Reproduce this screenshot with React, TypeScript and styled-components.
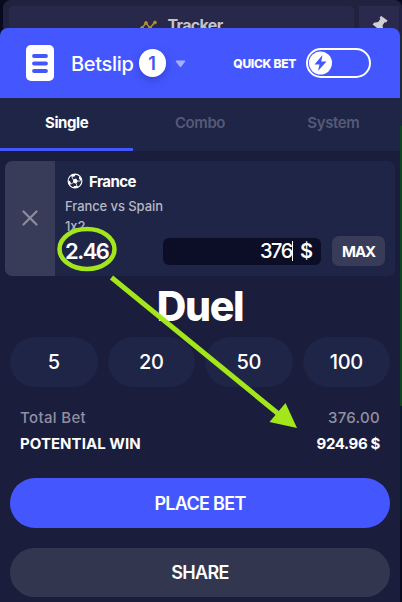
import React from "react";
import styled, { createGlobalStyle } from "styled-components";

const Global = createGlobalStyle`
  * { box-sizing: border-box; }
  body { margin: 0; background: #080b20; font-family: Inter, "Liberation Sans", sans-serif; color: #fff; }
  button, input { font: inherit; color: inherit; border: 0; padding: 0; background: none; }
`;

const Screen = styled.main`
  width: 402px;
  height: 602px;
  overflow: hidden;
  position: relative;
  background: linear-gradient(#1c2b3c 0 126px, #10461f 126px 406px, #0a1a2c 406px 520px, #080b20 520px);
`;
const TopBar = styled.div`
  height: 36px;
  display: flex;
  gap: 5px;
  padding: 6px 3px 0 9px;
  margin-left: 3px;
  background: #20223f;
  border-radius: 8px 8px 0 0;
`;
const Behind = styled.div`
  height: 36px;
  background: #080b20;
`;
const TrackerTab = styled.div`
  width: 345px;
  margin-left: -3px;
  display: flex;
  justify-content: center;
  gap: 10px;
  background: #28284a;
  border-radius: 5px 5px 0 0;
  color: #c3c2c9;
  font-size: 16px;
  font-weight: 700;
  line-height: 20px;
  padding: 9px 0 0 0;
  & > svg { margin-top: 5px; flex: none; }
`;
const TrackerLabel = styled.span`
  letter-spacing: -0.65px;
`;
const PinTab = styled.div`
  flex: 1;
  display: flex;
  justify-content: center;
  background: #2b2a4e;
  padding-top: 10px;
`;
const Panel = styled.section`
  position: relative;
  width: 400px;
  height: 574px;
  margin-top: -8px;
  background: #1a1d3b;
  border-radius: 8px 8px 0 0;
  overflow: hidden;
`;
const Header = styled.header`
  height: 70px;
  display: flex;
  align-items: center;
  background: #4457ff;
  padding: 0 29px 0 26px;
`;
const Title = styled.h1<{ $ls: number }>`
  margin: 2px 5px 0 17px;
  font-size: 20px;
  line-height: 26px;
  font-weight: 500;
  letter-spacing: ${(p) => p.$ls}px;
`;
const Count = styled.span`
  width: 27px;
  height: 28px;
  border-radius: 14px;
  background: #fff;
  color: #3f52f0;
  display: grid;
  place-items: center;
  font-size: 18px;
  font-weight: 600;
  box-shadow: 0 3px 8px rgba(20, 30, 120, 0.35);
`;
const Caret = styled.svg`
  margin: 1px 0 0 9px;
`;
const QuickLabel = styled.span`
  margin-left: auto;
  margin-right: 10px;
  font-size: 12px;
  font-weight: 800;
  letter-spacing: -0.3px;
`;
const Toggle = styled.button`
  width: 65px;
  height: 30px;
  border: 2px solid #fff;
  border-radius: 15px;
  padding: 0 0 0 1px;
  display: flex;
  align-items: center;
`;
const Tabs = styled.nav`
  height: 53px;
  display: grid;
  grid-template-columns: repeat(3, 1fr);
  background: #1f2546;
`;
const Tab = styled.button<{ $active?: boolean; $ls: number }>`
  border-bottom: 3px solid ${(p) => (p.$active ? "#4457ff" : "transparent")};
  padding-bottom: 1px;
  color: ${(p) => (p.$active ? "#fff" : "#555a76")};
  font-size: 15px;
  font-weight: ${(p) => (p.$active ? 700 : 600)};
  letter-spacing: ${(p) => p.$ls}px;
`;
const BetCard = styled.article`
  height: 115px;
  margin: 10px 5px 0;
  display: flex;
  border-radius: 7px;
  overflow: hidden;
  background: #1f2546;
`;
const Remove = styled.button`
  width: 50px;
  display: grid;
  place-items: center;
  padding-bottom: 2px;
  background: #393c59;
`;
const BetBody = styled.div`
  flex: 1;
  padding: 10px 10px 0;
`;
const Pick = styled.div`
  height: 20px;
  display: flex;
  align-items: center;
  gap: 6px;
  padding-left: 2px;
  font-size: 15px;
  font-weight: 700;
  letter-spacing: -0.65px;
`;
const PickName = styled.span`
  letter-spacing: -0.55px;
`;
const Detail = styled.div<{ $first?: boolean }>`
  height: 20px;
  line-height: 20px;
  margin-top: ${(p) => (p.$first ? 5 : 0)}px;
  color: #b6b8c5;
  font-size: 13px;
  font-weight: 500;
  letter-spacing: -0.08px;
`;
const StakeRow = styled.div`
  height: 30px;
  display: flex;
  align-items: center;
`;
const Odds = styled.strong`
  width: 98px;
  font-size: 22px;
  line-height: 30px;
  font-weight: 600;
  letter-spacing: -1.5px;
`;
const Stake = styled.div`
  width: 158px;
  height: 27px;
  border-radius: 6px;
  background: #0c0e27;
  display: flex;
  justify-content: flex-end;
  align-items: center;
  padding-right: 9px;
  font-size: 20px;
  font-weight: 500;
`;
const StakeValue = styled.span`
  letter-spacing: -1.4px;
`;
const Cursor = styled.i`
  width: 1px;
  height: 20px;
  margin-right: 7px;
  background: #fff;
`;
const Currency = styled.span`
  font-weight: 600;
  width: 12px;
`;
const Max = styled.button`
  width: 53px;
  height: 30px;
  margin-left: 11px;
  border-radius: 7px;
  background: #393c59;
  font-size: 15px;
  font-weight: 700;
  letter-spacing: -1.1px;
`;
const Brand = styled.h2`
  margin: 0;
  height: 61px;
  line-height: 61px;
  text-align: center;
  font-size: 41px;
  font-weight: 800;
  letter-spacing: -1.4px;
`;
const Chips = styled.div`
  display: grid;
  grid-template-columns: repeat(4, 1fr);
  gap: 10px;
  padding: 0 10px;
`;
const Chip = styled.button`
  height: 50px;
  border-radius: 25px;
  background: #1f2546;
  font-size: 20px;
  font-weight: 500;
  letter-spacing: -0.3px;
`;
const Summary = styled.dl`
  margin: 17px 20px 0;
`;
const Line = styled.div<{ $strong?: boolean }>`
  height: 26px;
  display: flex;
  justify-content: space-between;
  align-items: center;
  font-size: 15px;
  font-weight: ${(p) => (p.$strong ? 700 : 500)};
  color: ${(p) => (p.$strong ? "#fff" : "#8f91a2")};
`;
const Term = styled.dt<{ $ls: number }>`
  letter-spacing: ${(p) => p.$ls}px;
`;
const Value = styled.dd<{ $ls: number }>`
  margin: 0;
  letter-spacing: ${(p) => p.$ls}px;
`;
const Action = styled.button<{ $primary?: boolean }>`
  display: block;
  width: 380px;
  height: ${(p) => (p.$primary ? 50 : 49)}px;
  margin: ${(p) => (p.$primary ? 22 : 20)}px 10px 0;
  border-radius: 25px;
  background: ${(p) => (p.$primary ? "#4457ff" : "#32364f")};
  font-size: 18px;
  font-weight: 600;
  letter-spacing: -0.7px;
`;
const Annotation = styled.svg`
  position: absolute;
  inset: 0;
  pointer-events: none;
`;

const TrackerIcon = () => (
  <svg width="17" height="14" viewBox="0 0 17 14" fill="#b08d2e" stroke="#b08d2e">
    <path d="M2 8 6 3 10 8 15 2" fill="none" strokeWidth="1.6" />
    <circle cx="2" cy="8" r="1.4" /><circle cx="6" cy="3" r="1.4" /><circle cx="10" cy="8" r="1.4" /><circle cx="15" cy="2.5" r="1.4" />
  </svg>
);
const PinIcon = () => (
  <svg width="18" height="20" viewBox="0 0 18 20" fill="#d0d0d3">
    <g transform="translate(1 1) rotate(36 9 8)"><path d="M4.500 0h8v2.700h-1.300v4l3 3v2.300H10V18H8v-6H2.800V9.700l3-3v-4H4.500z" /></g>
  </svg>
);
const SlipIcon = () => (
  <svg width="28" height="36" viewBox="0 0 28 36">
    <rect width="28" height="36" rx="5" fill="#fff" />
    <path d="M8 11h12M8 18.500h12M8 26h12" stroke="#4457ff" strokeWidth="3.800" strokeLinecap="round" />
  </svg>
);
const BoltKnob = () => (
  <svg width="23" height="24" viewBox="0 0 23 24">
    <circle cx="11.500" cy="12" r="11.500" fill="#fff" />
    <path d="M13.500 4 5.500 13.500H10.500L9 20 17.500 10.500H12.300z" fill="#4457ff" />
  </svg>
);
const BallIcon = () => (
  <svg width="16" height="16" viewBox="0 0 16 16">
    <circle cx="8" cy="8" r="6.900" fill="none" stroke="#fff" strokeWidth="1.100" />
    <path d="M6 6.500 9 5.500 11 8 9.200 10.700 6.200 9.700zM4.500 1.700 9 1.200 7.500 3.500 4.500 4zM12 2.700 15 6.500 13.800 8 12 5.500zM1.200 7 3.500 8.700 4 11.500 2.200 11.500zM7 13 10 12.700 11.500 14 8 15.200 6 14.500z" fill="#fff" />
    <path d="M6 6.500 5 4M11 8h2.500M9.200 10.700 10 13M6.200 9.700 4 11" stroke="#fff" strokeWidth=".8" />
  </svg>
);

export default function App() {
  return (
    <>
      <Global />
      <Screen>
        <Behind>
          <TopBar>
            <TrackerTab><TrackerIcon /><TrackerLabel>Tracker</TrackerLabel></TrackerTab>
            <PinTab><PinIcon /></PinTab>
          </TopBar>
        </Behind>
        <Panel>
          <Header>
            <SlipIcon />
            <Title $ls={-0.3}>Betslip</Title>
            <Count>1</Count>
            <Caret width="11" height="8" viewBox="0 0 11 8"><path d="M1 1h9L5.500 7z" fill="#a5afff" stroke="#a5afff" strokeLinejoin="round" /></Caret>
            <QuickLabel>QUICK BET</QuickLabel>
            <Toggle aria-label="Quick bet"><BoltKnob /></Toggle>
          </Header>
          <Tabs>
            <Tab $active $ls={-0.4}>Single</Tab>
            <Tab $ls={-0.4}>Combo</Tab>
            <Tab $ls={-0.4}>System</Tab>
          </Tabs>
          <BetCard>
            <Remove aria-label="Remove">
              <svg width="16" height="16" viewBox="0 0 16 16"><path d="m1.500 1.500 13 13m0-13-13 13" stroke="#8b8d9d" strokeWidth="2.200" strokeLinecap="round" /></svg>
            </Remove>
            <BetBody>
              <Pick><BallIcon /><PickName>France</PickName></Pick>
              <Detail $first>France vs Spain</Detail>
              <Detail>1x2</Detail>
              <StakeRow>
                <Odds>2.46</Odds>
                <Stake><StakeValue>376</StakeValue><Cursor /><Currency>$</Currency></Stake>
                <Max>MAX</Max>
              </StakeRow>
            </BetBody>
          </BetCard>
          <Brand>Duel</Brand>
          <Chips>{[5, 20, 50, 100].map((n) => <Chip key={n}>{n}</Chip>)}</Chips>
          <Summary>
            <Line><Term $ls={0.35}>Total Bet</Term><Value $ls={0.3}>376.00</Value></Line>
            <Line $strong><Term $ls={0.05}>POTENTIAL WIN</Term><Value $ls={-0.35}>924.96 $</Value></Line>
          </Summary>
          <Action $primary>PLACE BET</Action>
          <Action>SHARE</Action>
        </Panel>
        <Annotation width="402" height="602">
          <ellipse cx="87" cy="249" rx="27.500" ry="20" fill="none" stroke="#a3e61b" strokeWidth="4.500" />
          <path d="M111.500 277.500 281 416" stroke="#a3e61b" strokeWidth="5" />
          <path d="M297 428 269.500 422 285.500 403z" fill="#a3e61b" />
        </Annotation>
      </Screen>
    </>
  );
}
